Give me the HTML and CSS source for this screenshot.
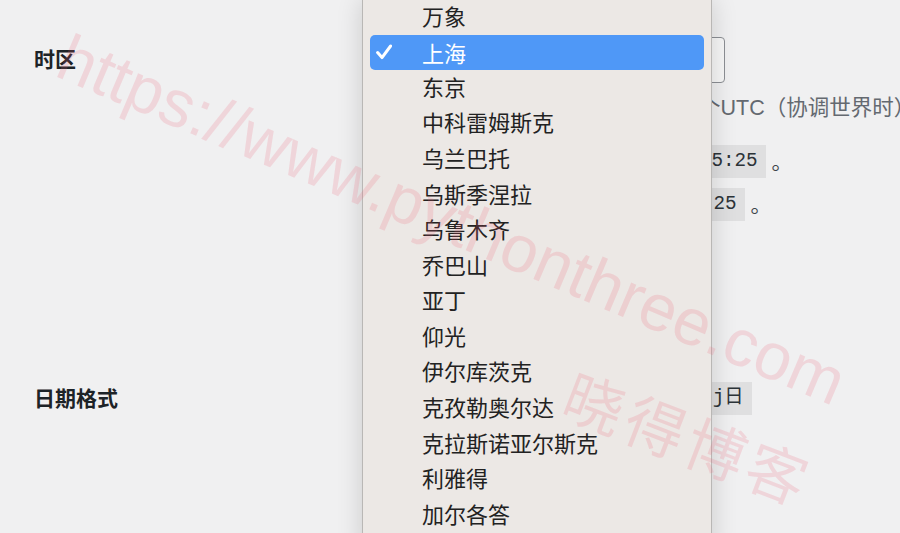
FILE: index.html
```html
<!DOCTYPE html>
<html lang="zh-CN">
<head>
  <meta charset="UTF-8" />
  <meta name="viewport" content="width=device-width, initial-scale=1" />
  <title>常规选项</title>
  <link rel="stylesheet" href="styles.css">
</head>
<body>
  <div class="wrap">
    <div class="form-row row-timezone">
      <div class="row-label">时区</div>
      <div class="row-field">
        <div class="tz-select"></div>
        <p class="description">选择与您在同一时区的城市或一个UTC（协调世界时）时间偏移。</p>
        <p class="time-line">协调世界时是 <code>2024-01-05 07:45:25</code> 。</p>
        <p class="time-line">本地时间为 <code>2024-01-05 15:45:25</code> 。</p>
      </div>
    </div>

    <div class="form-row row-date">
      <div class="row-label">日期格式</div>
      <div class="row-field">
        <label class="radio-line">
          <span class="radio"></span>
          <span class="date-text">2024年1月5日</span>
          <code>Y年n月j日</code>
        </label>
      </div>
    </div>
  </div>

  <!-- open timezone dropdown -->
  <div class="menu">
    <ul>
      <li>万象</li>
      <li class="selected">
        <svg class="check" width="16" height="16" viewBox="0 0 16 16">
          <polyline points="1.6,8.6 6,13.6 14.6,2" fill="none" stroke="#fff" stroke-width="3" stroke-linecap="round" stroke-linejoin="round" />
        </svg>
        上海
      </li>
      <li>东京</li>
      <li>中科雷姆斯克</li>
      <li>乌兰巴托</li>
      <li>乌斯季涅拉</li>
      <li>乌鲁木齐</li>
      <li>乔巴山</li>
      <li>亚丁</li>
      <li>仰光</li>
      <li>伊尔库茨克</li>
      <li>克孜勒奥尔达</li>
      <li>克拉斯诺亚尔斯克</li>
      <li>利雅得</li>
      <li>加尔各答</li>
      <li>加德满都</li>
    </ul>
  </div>

  <div class="watermark">
    <span class="wm-url">https://www.pythonthree.com</span>
    <span class="wm-name">晓得博客</span>
  </div>
</body>
</html>
```

FILE: styles.css
```css
body {
  margin: 0;
  height: 533px;
  overflow: hidden;
  position: relative;
  background-color: #f0f0f1;
  color: #1d2327;
  font-family: "Liberation Sans", "Noto Sans CJK SC", sans-serif;
  font-size: 21px;
}
.wrap {
  padding: 37px 0 0 34px;
}
.form-row {
  display: grid;
  grid-template-columns: 364px 1fr;
}
.row-label {
  font-weight: bold;
  line-height: 28px;
  padding-top: 9px;
}
.tz-select {
  width: 327px;
  height: 46px;
  box-sizing: border-box;
  border: 1px solid #8c8f94;
  border-radius: 4px;
  background-color: #f7f7f7;
}
.description {
  margin: 11px 0 0;
  line-height: 28px;
  font-size: 21.5px;
  color: #646970;
  white-space: nowrap;
}
.time-line {
  margin: 10px 0 0;
  line-height: 33px;
  color: #3c434a;
  white-space: nowrap;
}
.description + .time-line {
  margin-top: 23px;
}
code {
  display: inline-block;
  vertical-align: top;
  font-family: "Liberation Mono", "Noto Sans CJK SC", monospace;
  font-size: 19.3px;
  line-height: 25px;
  padding: 4px 8px;
  background-color: rgba(0, 0, 0, 0.07);
  color: #2c3338;
}
.row-date {
  margin-top: 161px;
}
.row-date .row-label {
  padding-top: 3px;
}
.radio-line {
  display: flex;
  align-items: center;
  white-space: nowrap;
}
.radio {
  width: 24px;
  height: 24px;
  box-sizing: border-box;
  border: 1px solid #8c8f94;
  border-radius: 50%;
  background: #fff;
  margin-right: 10px;
}
.date-text {
  width: 211px;
}

/* dropdown */
.menu {
  position: absolute;
  left: 362px;
  top: 0;
  bottom: -20px;
  width: 350px;
  box-sizing: border-box;
  padding: 0 7px;
  background-color: #ece8e5;
  border-left: 1px solid #b9b7b5;
  border-right: 1px solid #b9b7b5;
  box-shadow: 0 0 24px rgba(0, 0, 0, 0.16);
}
.menu ul {
  list-style: none;
  margin: -3px 0 0;
  padding: 0;
}
.menu li {
  height: 35.57px;
  display: flex;
  align-items: center;
  padding-left: 52px;
  border-radius: 5px;
  font-family: "Noto Sans CJK SC", sans-serif;
  font-size: 22px;
  line-height: 1;
  color: #222;
}
.menu li.selected {
  padding-left: 6px;
  background-color: #4f98f7;
  color: #fff;
  transform: translateY(2px);
}
.check {
  margin-right: 30px;
}

/* watermark */
.watermark {
  position: absolute;
  inset: 0;
  overflow: hidden;
  pointer-events: none;
  color: rgba(236, 96, 118, 0.18);
}
.wm-url {
  position: absolute;
  left: 62px;
  top: 16px;
  font-family: "Liberation Sans", sans-serif;
  font-size: 66px;
  white-space: nowrap;
  transform: rotate(23deg);
  transform-origin: 0 50%;
}
.wm-name {
  position: absolute;
  left: 568px;
  top: 346px;
  font-family: "Noto Sans CJK SC", sans-serif;
  font-size: 60px;
  letter-spacing: 5px;
  white-space: nowrap;
  transform: rotate(21deg);
  transform-origin: 0 50%;
}
```
